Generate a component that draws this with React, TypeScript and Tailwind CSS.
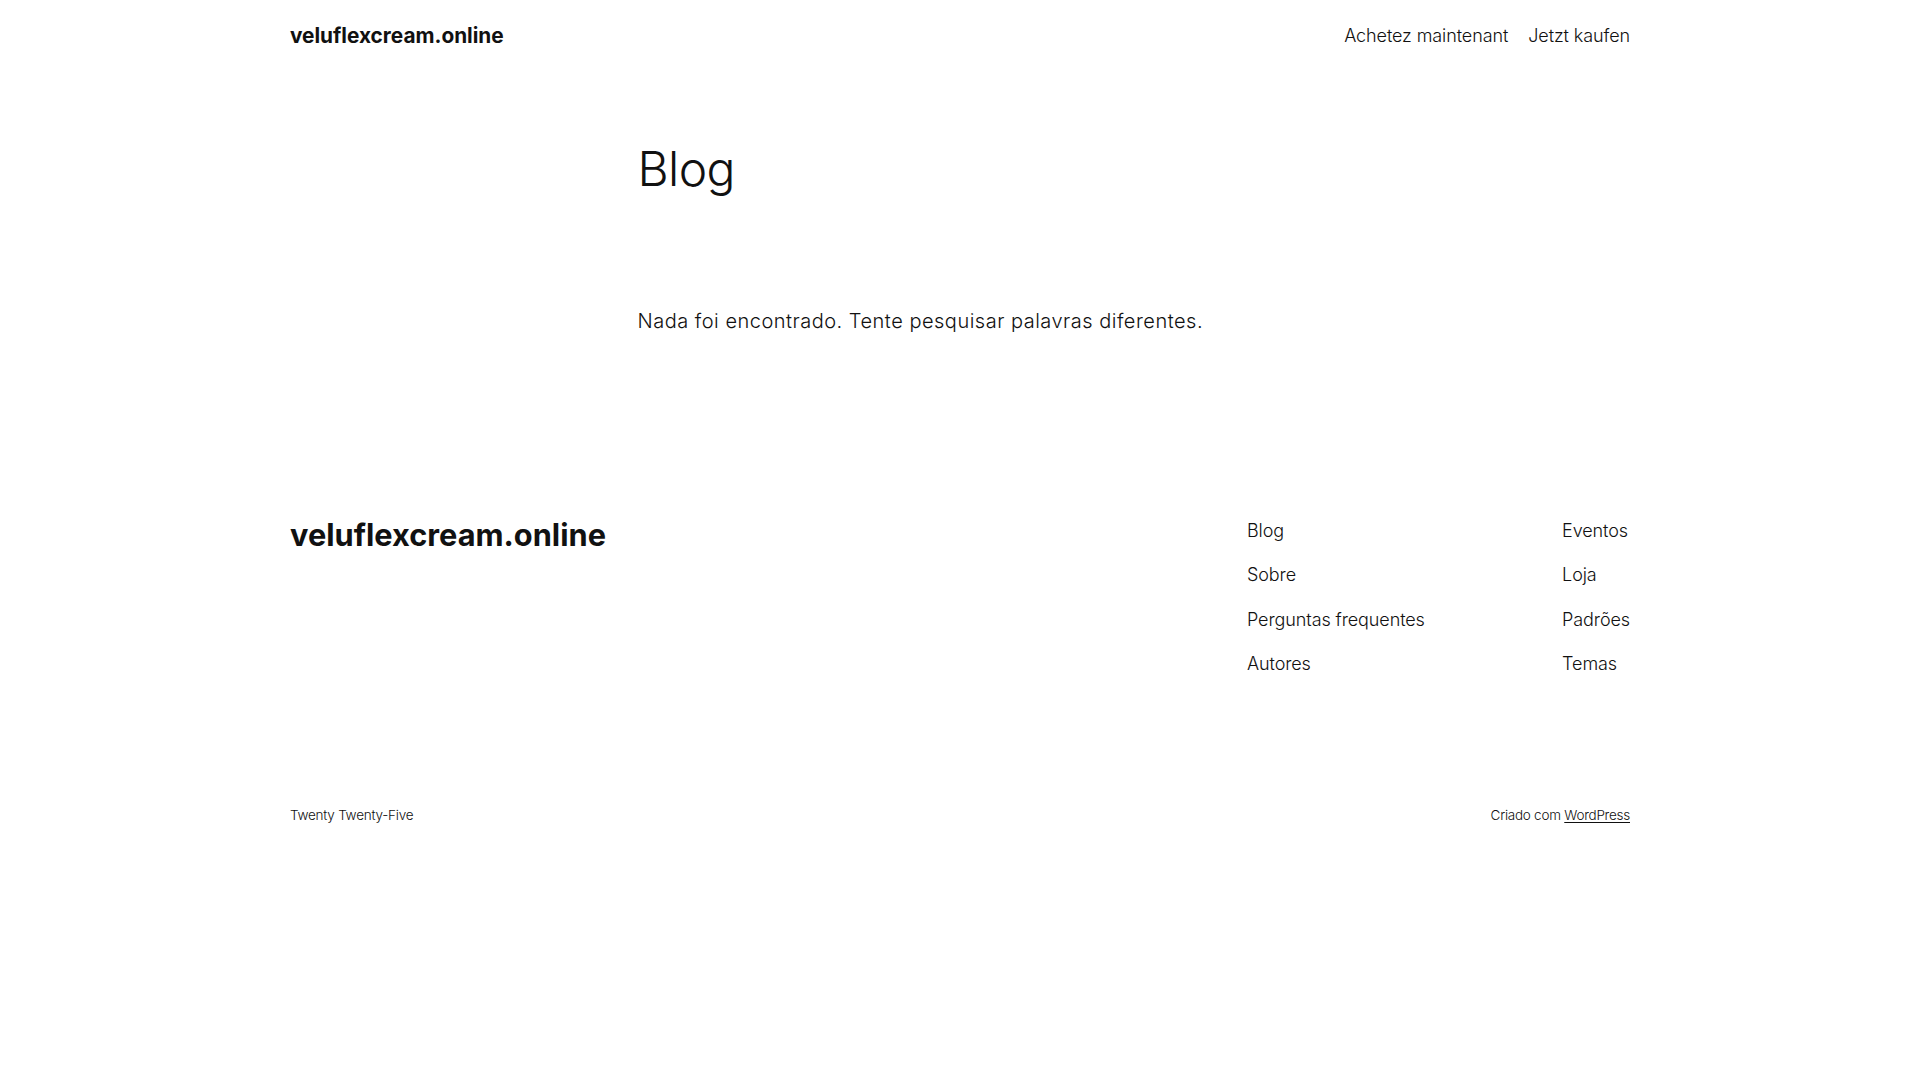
import React from 'react';

const footerLeft = ['Blog', 'Sobre', 'Perguntas frequentes', 'Autores'];
const footerRight = ['Eventos', 'Loja', 'Padrões', 'Temas'];

export default function App() {
    return (
        <div className="min-h-screen bg-white text-[#111111] font-['Inter','Noto_Sans',sans-serif]">
            {/* Header */}
            <header className="mx-auto flex h-[70px] w-[1340px] items-center justify-between">
                <a className="mt-[1px] text-[20.8px] font-bold leading-[28px]">veluflexcream.online</a>
                <nav className="flex items-center gap-[20px] text-[18px] font-light leading-[27px] tracking-[-0.1px]">
                    <a>Achetez maintenant</a>
                    <a>Jetzt kaufen</a>
                </nav>
            </header>

            {/* Main */}
            <main className="mx-auto w-[645px] pt-[70px]">
                <h1 className="text-[48px] font-light leading-[57.6px] tracking-[-0.6px]">Blog</h1>
                <p className="mt-[107px] text-[20px] font-light leading-[32px] tracking-[0.5px]">
                    Nada foi encontrado. Tente pesquisar palavras diferentes.
                </p>
            </main>

            {/* Footer */}
            <footer className="mx-auto mt-[180px] w-[1340px]">
                <div className="flex items-start justify-between">
                    <a className="text-[30.75px] font-bold leading-[36px]">veluflexcream.online</a>
                    <div className="flex w-[383px] justify-between text-[18px] font-light leading-[27.5px] tracking-[-0.1px]">
                        <ul className="flex flex-col gap-[17px]">
                            {footerLeft.map((item) => (
                                <li key={item}>
                                    <a>{item}</a>
                                </li>
                            ))}
                        </ul>
                        <ul className="flex flex-col gap-[17px]">
                            {footerRight.map((item) => (
                                <li key={item}>
                                    <a>{item}</a>
                                </li>
                            ))}
                        </ul>
                    </div>
                </div>

                <div className="mt-[127px] flex items-center justify-between text-[13.5px] font-light leading-[21px] tracking-[-0.25px]">
                    <p>Twenty Twenty-Five</p>
                    <p>
                        Criado com <a className="underline underline-offset-2">WordPress</a>
                    </p>
                </div>
            </footer>
        </div>
    );
}
